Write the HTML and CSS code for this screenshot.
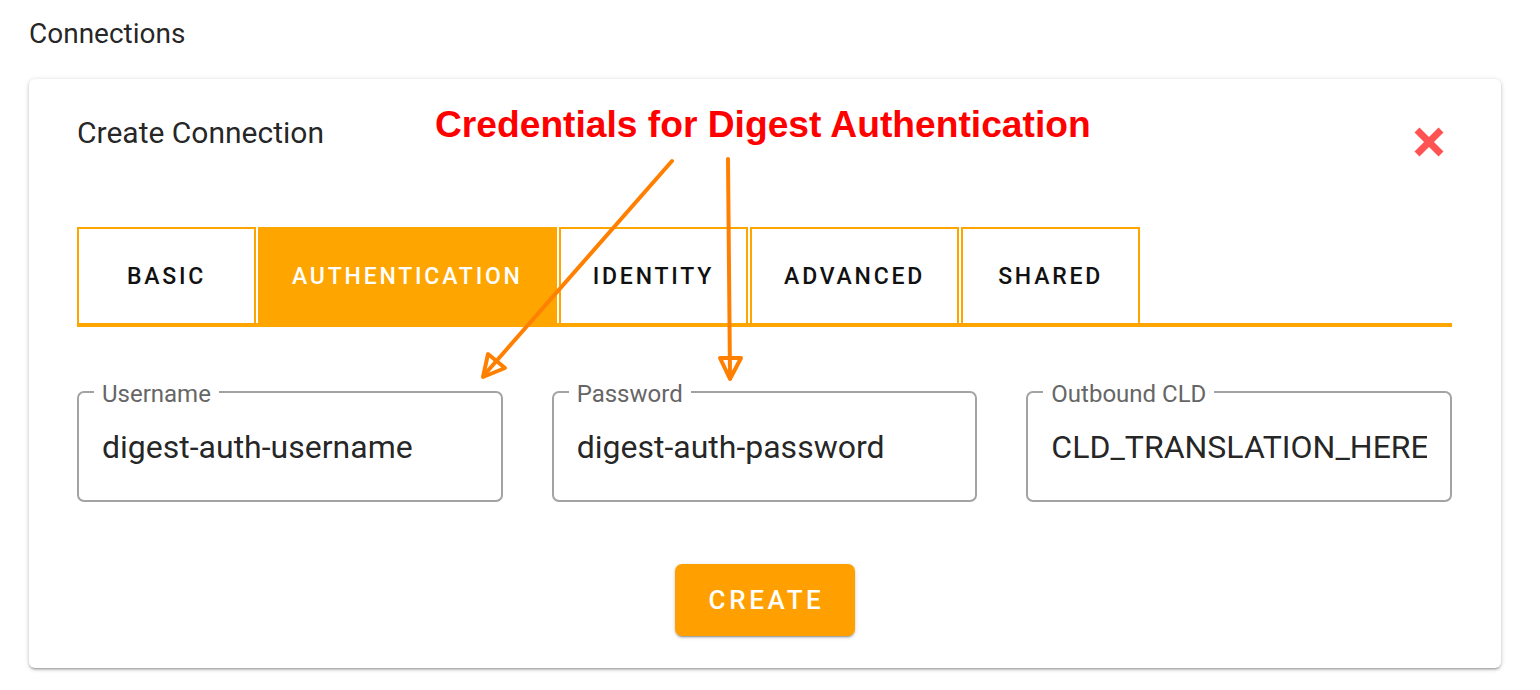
FILE: index.html
```html
<!DOCTYPE html>
<html lang="en">
<head>
<meta charset="utf-8">
<title>Connections</title>
<link rel="stylesheet" href="styles.css">
</head>
<body>
<div class="page">
  <h1 class="page-title">Connections</h1>
  <section class="card">
    <div class="card-head">
      <h2 class="card-title">Create Connection</h2>
      <button class="close" aria-label="Close">
        <svg width="32" height="32" viewBox="0 0 32 32"><path d="M4 4 L28 28 M28 4 L4 28" stroke="#ff5252" stroke-width="7" stroke-linecap="butt"/></svg>
      </button>
    </div>
    <nav class="tabs">
      <div class="tab">BASIC</div>
      <div class="tab active">AUTHENTICATION</div>
      <div class="tab">IDENTITY</div>
      <div class="tab">ADVANCED</div>
      <div class="tab">SHARED</div>
    </nav>
    <div class="fields">
      <fieldset class="field">
        <legend>Username</legend>
        <input class="value" value="digest-auth-username" readonly>
      </fieldset>
      <fieldset class="field">
        <legend>Password</legend>
        <input class="value" value="digest-auth-password" readonly>
      </fieldset>
      <fieldset class="field">
        <legend>Outbound CLD</legend>
        <input class="value" value="CLD_TRANSLATION_HERE" readonly>
      </fieldset>
    </div>
    <div class="actions">
      <button class="create">CREATE</button>
    </div>
  </section>
</div>
<div class="note">Credentials for Digest Authentication</div>
<svg class="arrows" width="1540" height="690" viewBox="0 0 1540 690">
  <g stroke="#ff8000" stroke-width="4" stroke-linecap="round" stroke-linejoin="round" fill="none">
    <path d="M672 161 L485 374"/>
    <path d="M483 377 L505 368 L488 354 Z"/>
    <path d="M728 159 L730 376"/>
    <path d="M720 358 L741 358 L730 379 Z"/>
  </g>
</svg>
</body>
</html>
```
FILE: styles.css
```css
* { box-sizing: border-box; }
html, body { margin: 0; padding: 0; background: #fff; }
body {
  font-family: Roboto, "Noto Sans", Arial, sans-serif;
  color: rgba(0,0,0,0.87);
  width: 1540px;
  height: 690px;
  overflow: hidden;
  position: relative;
}
.page {
  padding: 17px 0 0 29px;
}
.page-title {
  margin: 0 0 29px 0;
  font-size: 28px;
  font-weight: 400;
  line-height: 33px;
}
.card {
  width: 1472px;
  background: #fff;
  border-radius: 6px;
  box-shadow: 0 2px 2px rgba(0,0,0,0.14), 0 3px 1px -2px rgba(0,0,0,0.12), 0 1px 5px rgba(0,0,0,0.2);
  padding: 36px 49px 32px 48px;
}
.card-head {
  display: flex;
  justify-content: space-between;
  align-items: flex-start;
  height: 44px;
  margin-bottom: 68px;
}
.card-title {
  margin: 0;
  font-size: 30px;
  font-weight: 400;
  line-height: 36px;
}
.close {
  border: 0;
  background: none;
  padding: 0;
  margin: 11px 7px 0 0;
  width: 32px;
  height: 32px;
  display: block;
}
.close svg { display: block; }
.tabs {
  display: flex;
  gap: 2px;
  border-bottom: 4px solid #ffa500;
}
.tab {
  min-width: 179px;
  height: 96px;
  padding: 0 32px;
  border: 2px solid #ffa500;
  border-bottom: 0;
  display: flex;
  align-items: center;
  justify-content: center;
  font-size: 23px;
  font-weight: 500;
  letter-spacing: 2.8px;
  color: #111;
}
.tab.active {
  background: #ffa500;
  color: #fff;
}
.fields {
  display: grid;
  grid-template-columns: repeat(3, 1fr);
  gap: 49px;
  margin-top: 49px;
}
.field {
  margin: 0;
  min-width: 0;
  border: 2px solid #a3a3a3;
  border-radius: 7px;
  padding: 20px 23px 34px 23px;
}
.field legend {
  font-size: 24px;
  line-height: 28px;
  color: #666;
  padding: 4px 8px 0 8px;
  margin-left: -8px;
}
.value {
  display: block;
  width: 100%;
  border: 0;
  outline: none;
  padding: 0;
  background: transparent;
  font-family: Roboto, "Noto Sans", Arial, sans-serif;
  font-size: 32px;
  line-height: 38px;
  height: 38px;
  color: rgba(0,0,0,0.87);
}
.actions {
  display: flex;
  justify-content: center;
  margin-top: 62px;
}
.create {
  height: 72px;
  padding: 0 31px 0 34px;
  border: 0;
  border-radius: 7px;
  background: #ffa000;
  color: #fff;
  font-family: Roboto, "Noto Sans", Arial, sans-serif;
  font-size: 26px;
  font-weight: 500;
  letter-spacing: 3.6px;
  box-shadow: 0 3px 1px -2px rgba(0,0,0,0.2), 0 2px 2px rgba(0,0,0,0.14), 0 1px 5px rgba(0,0,0,0.12);
  margin-left: 1px;
}
.note {
  position: absolute;
  left: 435px;
  top: 103px;
  font-family: "Liberation Sans", Arial, sans-serif;
  font-weight: 700;
  font-size: 37.2px;
  line-height: 42px;
  color: #ff0000;
  white-space: nowrap;
}
.arrows {
  position: absolute;
  left: 0;
  top: 0;
  pointer-events: none;
}
```
